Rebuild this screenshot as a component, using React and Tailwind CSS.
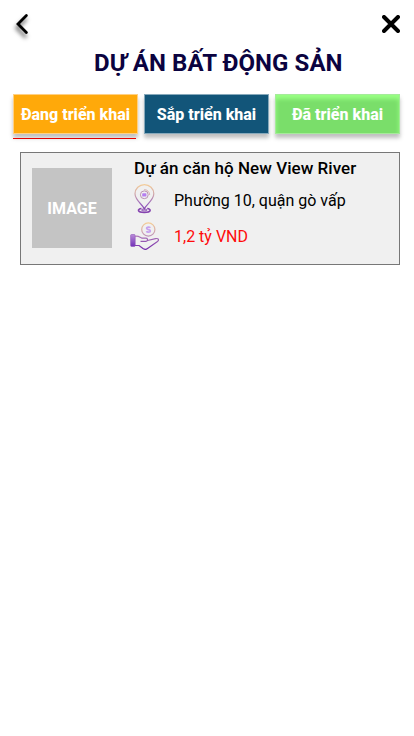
import React from "react";

function BackIcon() {
  return (
    <svg width="20" height="32" viewBox="0 0 20 32" className="overflow-visible">
      <defs>
        <filter id="backShadow" x="-100%" y="-60%" width="300%" height="250%">
          <feDropShadow dx="-1" dy="4" stdDeviation="2" floodColor="#000" floodOpacity="0.65" />
        </filter>
      </defs>
      <path
        d="M14.4 7.4 L6 16 L14.4 24.6"
        fill="none"
        stroke="#000"
        strokeWidth="2.8"
        strokeLinecap="round"
        filter="url(#backShadow)"
      />
    </svg>
  );
}

function CloseIcon() {
  return (
    <svg width="18" height="18" viewBox="0 0 18 18">
      <path d="M2 2 L16 16 M16 2 L2 16" fill="none" stroke="#000" strokeWidth="4" strokeLinecap="round" />
    </svg>
  );
}

function PinIcon() {
  return (
    <svg width="30" height="30" viewBox="0 0 30 30" fill="none">
      <defs>
        <linearGradient id="pin" gradientUnits="userSpaceOnUse" x1="0" y1="0" x2="0" y2="29">
          <stop offset="0" stopColor="#f6cf98" />
          <stop offset="0.4" stopColor="#c9a0ad" />
          <stop offset="0.7" stopColor="#9862bd" />
          <stop offset="1" stopColor="#7527a8" />
        </linearGradient>
      </defs>
      <path
        d="M14.3 24.8 C13 21 5 16.2 5 9.8 A9.4 9.2 0 0 1 23.8 9.8 C23.8 16.2 15.7 21 14.3 24.8Z"
        stroke="url(#pin)"
        strokeWidth="1.2"
      />
      <circle cx="14.3" cy="10.8" r="3.9" stroke="#bb91b4" strokeWidth="1" />
      <rect x="12.2" y="9.3" width="4.2" height="3.2" rx="0.6" fill="#b57df0" />
      <path d="M14.2 5.6 A5.5 5.5 0 0 1 19.7 11" stroke="#d3aaa9" strokeWidth="0.9" />
      <path
        d="M11.5 24.5 C7 25 7 28.4 14.3 28.4 C21.6 28.4 21.6 25 17.2 24.5"
        stroke="#8543af"
        strokeWidth="1.5"
      />
      <ellipse cx="14.3" cy="26" rx="2.8" ry="1" stroke="#8543af" strokeWidth="1" />
    </svg>
  );
}

function HandIcon() {
  return (
    <svg width="30" height="30" viewBox="0 0 30 30" fill="none">
      <defs>
        <linearGradient id="coin" x1="0" y1="0" x2="0" y2="1">
          <stop offset="0" stopColor="#f5ce97" />
          <stop offset="1" stopColor="#bd92b8" />
        </linearGradient>
        <linearGradient id="cuff" x1="0" y1="0" x2="0" y2="1">
          <stop offset="0" stopColor="#b98bd8" />
          <stop offset="1" stopColor="#7130b8" />
        </linearGradient>
        <linearGradient id="hand" gradientUnits="userSpaceOnUse" x1="0" y1="13" x2="0" y2="28">
          <stop offset="0" stopColor="#b27db9" />
          <stop offset="1" stopColor="#7025aa" />
        </linearGradient>
      </defs>
      <circle cx="18.3" cy="7.5" r="6.6" stroke="url(#coin)" strokeWidth="1.2" />
      <path
        d="M20.3 5.8 C19.5 4.7 16.5 4.8 16.6 6.3 C16.7 8 20.3 7 20.3 8.9 C20.3 10.4 17.2 10.4 16.4 9.2"
        stroke="#c6a0ee"
        strokeWidth="1.8"
      />
      <rect x="0.6" y="12.5" width="4.6" height="12" rx="1" fill="url(#cuff)" stroke="#8f57bb" strokeWidth="0.6" />
      <path
        d="M5 14.5 C8 13.2 9.5 15.2 12 16.2 H16 C18 16.3 18 19.3 16 19.3 H10.5 M17.5 18.5 L25.5 16.6 C28.8 16 29.3 18 27.5 19.5 L17.5 26.6 C16.2 27.6 14.5 27.5 13 26.5 L9 23.5 H5"
        stroke="url(#hand)"
        strokeWidth="1.2"
        strokeLinejoin="round"
      />
    </svg>
  );
}

const tabs = [
  {
    label: "Đang triển khai",
    style: "bg-[#ffa90a] border-[#ffd083] shadow-[0_4px_4px_rgba(0,0,0,0.25)]",
  },
  {
    label: "Sắp triển khai",
    style: "bg-[#125579] border-[#87a9bb] shadow-[0_4px_4px_rgba(0,0,0,0.25)]",
  },
  {
    label: "Đã triển khai",
    style:
      "bg-[#7ade6a] border-[#a5eb9a] shadow-[0_4px_4px_rgba(0,0,0,0.25),inset_0_4px_4px_#99ff84]",
  },
];

export default function App() {
  return (
    <div className="h-[736px] w-[414px] overflow-hidden bg-white font-['Roboto',sans-serif] text-black">
      <header className="flex h-12 items-start justify-between pl-3 pr-3.5">
        <button aria-label="Quay lại" className="pt-2">
          <BackIcon />
        </button>
        <button aria-label="Đóng" className="pt-[15px]">
          <CloseIcon />
        </button>
      </header>
      <h1 className="h-[46px] whitespace-nowrap pl-[94px] text-2xl font-bold leading-[30px] tracking-[0.06px] text-[#0b0340]">
        DỰ ÁN BẤT ĐỘNG SẢN
      </h1>
      <nav className="flex gap-1.5 pl-[13px]">
        {tabs.map((tab) => (
          <button
            key={tab.label}
            className={`h-10 w-[125px] whitespace-nowrap border pt-0.5 text-base font-extrabold leading-5 text-white ${tab.style}`}
          >
            {tab.label}
          </button>
        ))}
      </nav>
      <div className="ml-[13px] mt-1 h-px w-[123px] bg-[#ff0000]" />
      <article className="ml-5 mt-[13px] flex h-[113px] w-[380px] border border-[#777] bg-[#f0f0f0]">
        <div className="ml-[11px] mt-[15px] flex size-20 items-center justify-center bg-[#c4c4c4] pt-0.5 text-base font-bold text-white">
          IMAGE
        </div>
        <div className="ml-[18px] pt-[5px]">
          <h2 className="whitespace-nowrap pl-1 text-[17px] font-medium leading-5 tracking-[0.03px]">
            Dự án căn hộ New View River
          </h2>
          <div className="mt-1.5 flex h-[30px] items-start">
            <PinIcon />
            <span className="ml-3.5 whitespace-nowrap pt-[7px] text-base leading-5">Phường 10, quận gò vấp</span>
          </div>
          <div className="mt-2 flex h-[30px] items-start">
            <HandIcon />
            <span className="ml-3.5 whitespace-nowrap pt-[5px] text-base leading-5 text-[#ff0a0a]">1,2 tỷ VND</span>
          </div>
        </div>
      </article>
    </div>
  );
}
